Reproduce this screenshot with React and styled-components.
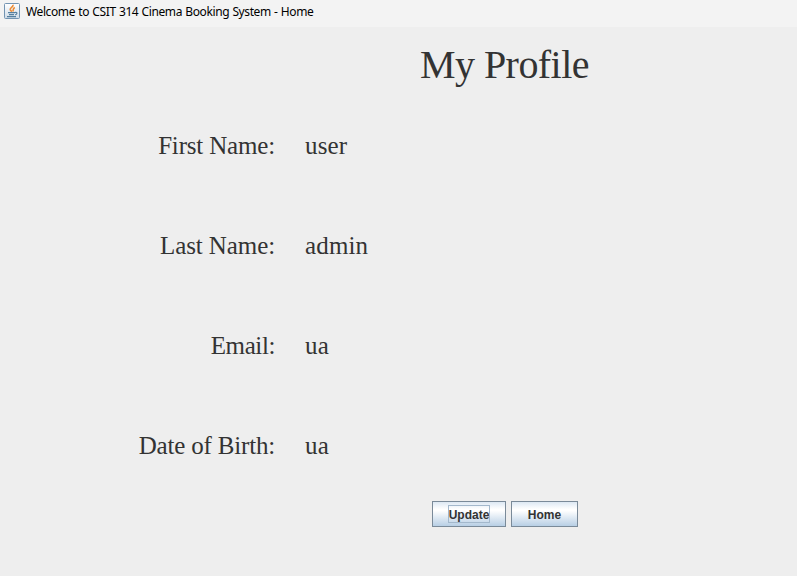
import React from "react";
import styled, { createGlobalStyle } from "styled-components";

const Global = createGlobalStyle`
  * { box-sizing: border-box; }
  body { margin: 0; background: #eeeeee; overflow: hidden; }
`;
const Window = styled.div`
  width: 797px; height: 576px; background: #eeeeee; color: #333333;
  display: flex; flex-direction: column;
`;
const TitleBar = styled.header`
  height: 27px; flex: none; background: #f3f3f3; display: flex;
  align-items: flex-start; padding: 3px 0 0 4px; gap: 6px;
`;
const TitleText = styled.span`
  font: 12px/18px "Noto Sans", "Open Sans", sans-serif; color: #000;
  white-space: nowrap; letter-spacing: -0.39px; word-spacing: 0.5px;
`;
const Heading = styled.h1`
  margin: 15px 0 0 420px; height: 46px; font: 40px/46px "Liberation Serif", serif;
  white-space: nowrap; letter-spacing: -0.55px;
`;
const Fields = styled.dl`
  margin: 8px 0 0; display: grid; grid-template-columns: 275px 1fr;
  grid-auto-rows: 100px; column-gap: 30px;
`;
const Label = styled.dt`
  font: 25px/100px "Liberation Serif", serif; text-align: right; white-space: nowrap;
  letter-spacing: ${(p) => p.$tracking}px;
`;
const Value = styled.dd`
  margin: 0; font: 25px/100px "Liberation Serif", serif; letter-spacing: 0.15px;
`;
const Actions = styled.div`
  display: flex; gap: 5px; margin: 5px 0 0 432px;
`;
const Button = styled.button`
  width: ${(p) => p.$width}px; height: 26px; padding: 0; border: 1px solid #7a8a99;
  border-radius: 0; display: flex; align-items: center; justify-content: center;
  background: linear-gradient(#dde8f3 0%, #ffffff 30%, #ffffff 36%, #b8cfe5 100%);
  font: bold 12px/15px "Liberation Sans", sans-serif; color: #333;
`;
const FocusLabel = styled.span`
  height: 16px; padding-top: 2px;
  outline: 1px solid ${(p) => (p.$focused ? "#a3b8cc" : "transparent")};
`;

function JavaIcon() {
  return (
    <svg width="16" height="16" viewBox="0 0 16 16" fill="none">
      <defs>
        <linearGradient id="tile" x2="0" y2="1">
          <stop stopColor="#ffffff" />
          <stop offset="1" stopColor="#cfdce8" />
        </linearGradient>
      </defs>
      <rect x=".5" y=".5" width="15" height="15" rx="1" fill="url(#tile)" stroke="#7394b2" />
      <path d="M9 1.8c.8 2-3.4 3-2.8 4.8.3.8 1.3 1.3 1.4 2.2M10.8 4.4C8.3 5.5 9.8 6.8 8.8 8.4" stroke="#ed8a32" strokeWidth="1.6" />
      <path d="M4 9.7h7M5 11.6h5M3 13.6h9M11 9.5c2.7-.5 2.4 1.8.2 2.3" stroke="#557f9f" strokeWidth="1.2" />
    </svg>
  );
}

const fields = [
  { label: "First Name:", value: "user", tracking: -0.17 },
  { label: "Last Name:", value: "admin", tracking: -0.1 },
  { label: "Email:", value: "ua", tracking: -0.4 },
  { label: "Date of Birth:", value: "ua", tracking: -0.18 },
];

export default function App() {
  return (
    <Window>
      <Global />
      <TitleBar>
        <JavaIcon />
        <TitleText>Welcome to CSIT 314 Cinema Booking System - Home</TitleText>
      </TitleBar>
      <Heading>My Profile</Heading>
      <Fields>
        {fields.map(({ label, value, tracking }) => (
          <React.Fragment key={label}>
            <Label $tracking={tracking}>{label}</Label>
            <Value>{value}</Value>
          </React.Fragment>
        ))}
      </Fields>
      <Actions>
        <Button $width={74}><FocusLabel $focused>Update</FocusLabel></Button>
        <Button $width={67}><FocusLabel>Home</FocusLabel></Button>
      </Actions>
    </Window>
  );
}
